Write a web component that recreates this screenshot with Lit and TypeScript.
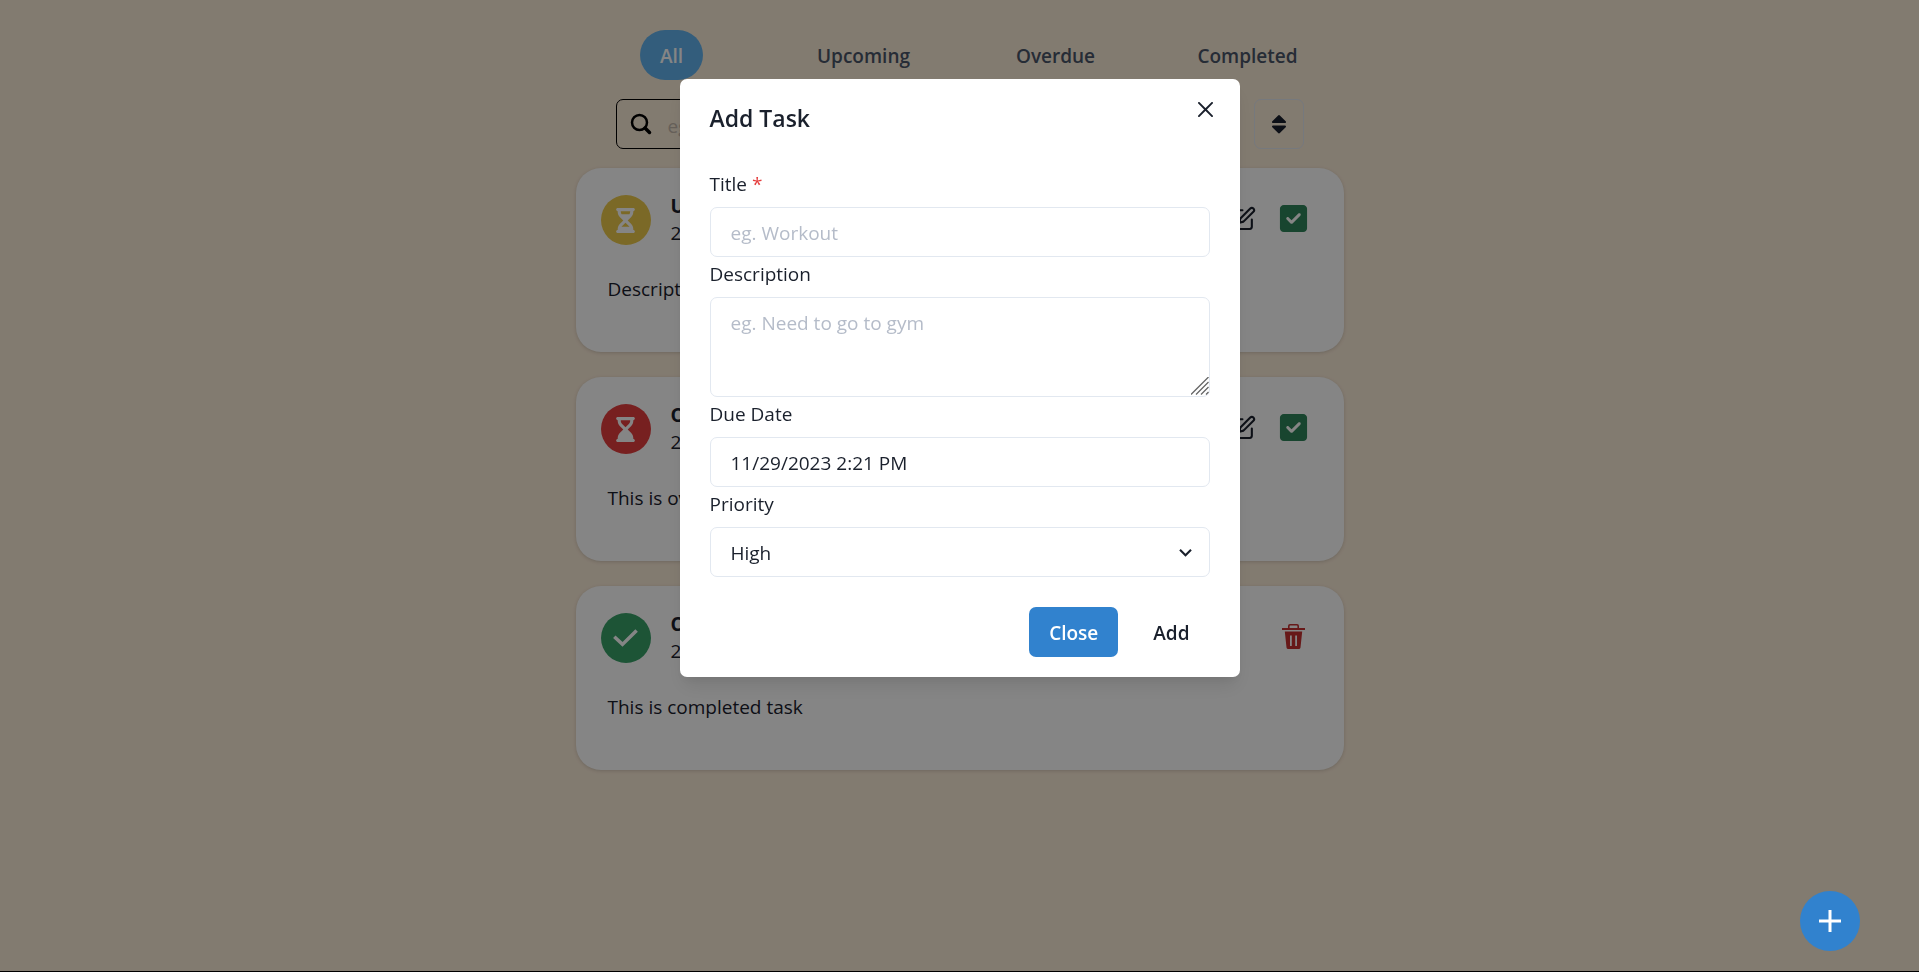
import { LitElement, html, css, svg } from "lit";
import { customElement, state } from "lit/decorators.js";

type Status = "upcoming" | "overdue" | "completed";
interface Task { status: Status; title: string; due: string; description: string; }

const HOURGLASS_HALF = "M32 0C14.3 0 0 14.3 0 32S14.3 64 32 64V75c0 42.4 16.9 83.1 46.9 113.1L146.7 256 78.9 323.9C48.9 353.9 32 394.6 32 437v11c-17.7 0-32 14.3-32 32s14.3 32 32 32H352c17.7 0 32-14.3 32-32s-14.3-32-32-32V437c0-42.4-16.9-83.1-46.9-113.1L237.3 256l67.9-67.9c30-30 46.9-70.7 46.9-113.1V64c17.7 0 32-14.3 32-32s-14.3-32-32-32H32zM96 75V64H288V75c0 19-5.6 37.4-16 53H112c-10.3-15.6-16-34-16-53zm16 309c3.5-5.3 7.6-10.3 12.1-14.9L192 301.3l67.9 67.9c4.6 4.6 8.6 9.6 12.1 14.9H112z";
const HOURGLASS_END = "M32 0C14.3 0 0 14.3 0 32S14.3 64 32 64V75c0 42.4 16.9 83.1 46.9 113.1L146.7 256 78.9 323.9C48.9 353.9 32 394.6 32 437v11c-17.7 0-32 14.3-32 32s14.3 32 32 32H352c17.7 0 32-14.3 32-32s-14.3-32-32-32V437c0-42.4-16.9-83.1-46.9-113.1L237.3 256l67.9-67.9c30-30 46.9-70.7 46.9-113.1V64c17.7 0 32-14.3 32-32s-14.3-32-32-32H32zM96 75V64H288V75c0 25.5-10.1 49.9-28.1 67.9L192 210.7l-67.9-67.9C106.1 124.9 96 100.4 96 75z";
const SQUARE_CHECK = "M64 32C28.7 32 0 60.7 0 96V416c0 35.3 28.7 64 64 64H384c35.3 0 64-28.7 64-64V96c0-35.3-28.7-64-64-64H64zM337 209L209 337c-9.4 9.4-24.6 9.4-33.9 0l-64-64c-9.4-9.4-9.4-24.6 0-33.9s24.6-9.4 33.9 0l47 47L303 175c9.4-9.4 24.6-9.4 33.9 0s9.4 24.6 0 33.9z";

const icons = {
  upcoming: svg`<svg width="25" height="25" viewBox="0 0 384 512" fill="currentColor"><path d=${HOURGLASS_HALF}></path></svg>`,
  overdue: svg`<svg width="25" height="25" viewBox="0 0 384 512" fill="currentColor"><path d=${HOURGLASS_END}></path></svg>`,
  completed: svg`<svg width="25" height="18" viewBox="0 0 25 18" fill="none" stroke="currentColor" stroke-width="3.500"><path d="M1.300 7.700 9.500 15.400 23.600 1.500"></path></svg>`,
  done: svg`<svg width="31" height="31" viewBox="0 0 448 512" fill="currentColor"><path d=${SQUARE_CHECK}></path></svg>`,
  edit: svg`<svg width="25" height="25" viewBox="0 0 24 24" fill="none" stroke="currentColor" stroke-width="2" stroke-linecap="round" stroke-linejoin="round"><path d="M11 4H4a2 2 0 0 0-2 2v14a2 2 0 0 0 2 2h14a2 2 0 0 0 2-2v-7"></path><path d="M18.5 2.5a2.121 2.121 0 0 1 3 3L12 15l-4 1 1-4 9.500-9.500z"></path></svg>`,
  trash: svg`<svg width="23" height="25" viewBox="0 0 23 25" fill="none" stroke="currentColor"><path d="M6.800 4.500V2a1.200 1.200 0 0 1 1.200-1.200h7A1.200 1.200 0 0 1 16.200 2v2.500" stroke-width="1.600"></path><path d="M0 5H23" stroke-width="2"></path><path fill="currentColor" stroke="none" fill-rule="evenodd" d="M2.800 7.500h17.400L18.500 23.400A1.800 1.800 0 0 1 16.700 25H6.300a1.800 1.800 0 0 1-1.800-1.600zM8 11.500v10.500h1.800V11.500zm5.200 0v10.500H15V11.500z"></path></svg>`,
  search: svg`<svg width="22" height="22" viewBox="0 0 22 22" fill="none" stroke="currentColor" stroke-linecap="round"><circle cx="9.500" cy="9.500" r="7.500" stroke-width="2.500"></circle><path d="M15 15l4.500 4.500" stroke-width="3.500"></path></svg>`,
  sort: svg`<svg width="14" height="20" viewBox="0 0 14 20" fill="currentColor"><path d="M1 9a1 1 0 0 1-.7-1.700L5.900 1.700a1.500 1.500 0 0 1 2.200 0l5.600 5.600A1 1 0 0 1 13 9zM1 11.500a1 1 0 0 0-.7 1.700L5.900 18.800a1.500 1.500 0 0 0 2.200 0l5.600-5.600a1 1 0 0 0-.7-1.700z"></path></svg>`,
  close: svg`<svg width="15" height="15" viewBox="0 0 24 24" fill="currentColor"><path d="M.439 21.440a1.500 1.500 0 0 0 2.122 2.121l9.262-9.261a.25.25 0 0 1 .354 0l9.262 9.263a1.500 1.500 0 1 0 2.122-2.121L14.300 12.177a.25.25 0 0 1 0-.354l9.263-9.262A1.500 1.500 0 0 0 21.439.44L12.177 9.700a.25.25 0 0 1-.354 0L2.561.44A1.500 1.500 0 0 0 .439 2.561L9.700 11.823a.25.25 0 0 1 0 .354z"></path></svg>`,
  chevron: svg`<svg width="25" height="25" viewBox="0 0 24 24" fill="currentColor"><path d="M16.590 8.590 12 13.170 7.410 8.590 6 10l6 6 6-6z"></path></svg>`,
  plus: svg`<svg width="30" height="30" viewBox="0 0 30 30" fill="none" stroke="currentColor" stroke-width="3"><path d="M15 4v22M4 15h22"></path></svg>`,
  grip: svg`<svg class="grip" width="18" height="18" viewBox="0 0 18 18" fill="none" stroke="#666" stroke-width="1.300"><path d="M0 17.500 17.500 0M5 17.500 17.500 5M10 17.500 17.500 10M15 17.500 17.500 15"></path></svg>`,
};

@customElement("app-root")
export class AppRoot extends LitElement {
  @state() private filter = "All";
  @state() private dialogOpen = true;

  private filters = ["All", "Upcoming", "Overdue", "Completed"];
  private tasks: Task[] = [
    { status: "upcoming", title: "Upcoming Task", due: "29-11-2023", description: "Description of upcoming task" },
    { status: "overdue", title: "Overdue Task", due: "28-11-2023", description: "This is overdue task" },
    { status: "completed", title: "Completed Task", due: "27-11-2023", description: "This is completed task" },
  ];

  static styles = css`
    :host {
      display: block;
      min-height: 100vh;
      box-sizing: border-box;
      background: #faebd7;
      border-bottom: 1px solid #000;
      color: #1a202c;
      font-family: "Segoe UI", "Open Sans", "Noto Sans", sans-serif;
      font-size: 19px;
      line-height: 30px;
    }
    *, *::before, *::after { box-sizing: border-box; }
    button, input, textarea, select { font: inherit; color: inherit; margin: 0; }
    button { border: 0; background: none; padding: 0; cursor: pointer; }
    svg { display: block; }
    .page { max-width: 768px; margin: 0 auto; padding: 30px 0 50px; display: flex; flex-direction: column; gap: 19px; }
    .tabs { display: grid; grid-template-columns: repeat(4, 1fr); justify-items: center; }
    .tab { height: 50px; padding: 2px 20px 0; border-radius: 25px; font-weight: 600; color: #4a5568; }
    .tab.active { background: #63b3ed; color: #fff; }
    .tools { display: flex; gap: 20px; padding: 0 40px; }
    .search { flex: 1; display: flex; align-items: center; height: 50px; border: 1px solid #000; border-radius: 7px; padding-left: 13px; gap: 16px; color: #000; }
    .search input { flex: 1; min-width: 0; height: 48px; border: 0; background: none; padding: 4px 0 0; outline: 0; }
    ::placeholder { color: #b5bcc9; opacity: 1; }
    .search ::placeholder { color: #c4b8ab; }
    .sort { width: 50px; height: 50px; border: 1px solid #e2e8f0; border-radius: 7px; display: grid; place-items: center; }
    .list { display: flex; flex-direction: column; gap: 25px; list-style: none; margin: 0; padding: 0; }
    .card { background: #fff; border-radius: 25px; padding: 25px 25px 48px; box-shadow: 0 1px 4px rgba(0,0,0,.1), 0 1px 3px rgba(0,0,0,.06); }
    .head { display: flex; gap: 20px; align-items: center; }
    .avatar { width: 50px; height: 50px; border-radius: 50%; display: grid; place-items: center; color: #fff; }
    .avatar.upcoming { background: #ecc94b; }
    .avatar.overdue { background: #e53e3e; }
    .avatar.completed { background: #38a169; }
    .names { flex: 1; }
    .names h2 { margin: 0; font-size: 19px; line-height: 26px; font-weight: 700; }
    .names p { margin: 0; line-height: 28px; }
    .actions { display: flex; align-self: flex-start; }
    .action { width: 50px; height: 50px; display: grid; place-items: center; }
    .action.done { color: #2f855a; }
    .action.trash { color: #c53030; }
    .desc { margin: 27px 0 0; padding-left: 7px; }
    .overlay { position: fixed; inset: 0 0 1px; background: rgba(0,0,0,.48); display: flex; justify-content: center; align-items: flex-start; padding-top: 79px; }
    .dialog { position: relative; width: 560px; background: #fff; border-radius: 7px; box-shadow: 0 12px 19px -4px rgba(0,0,0,.1), 0 5px 8px -2px rgba(0,0,0,.05); }
    .dialog header { padding: 20px 30px; }
    .dialog h1 { margin: 0; font-size: 23px; line-height: 38px; font-weight: 600; }
    .x { position: absolute; top: 10px; right: 14px; width: 40px; height: 40px; display: grid; place-items: center; }
    .fields { padding: 10px 30px; display: flex; flex-direction: column; }
    .fields label { padding-top: 2px; margin-bottom: 8px; }
    .req { color: #e53e3e; }
    .control { width: 100%; height: 50px; border: 1px solid #e2e8f0; border-radius: 7px; padding: 2px 20px 0; background: #fff; outline: 0; }
    textarea.control { height: 100px; padding: 10px 20px; display: block; resize: vertical; }
    textarea::-webkit-resizer { display: none; }
    .area { position: relative; }
    .grip { position: absolute; right: 1px; bottom: 2px; pointer-events: none; }
    .select { display: grid; align-items: center; }
    .select > * { grid-area: 1 / 1; }
    .select select { appearance: none; }
    .select svg { justify-self: end; margin-right: 12px; pointer-events: none; }
    .dialog footer { display: flex; justify-content: flex-end; gap: 15px; padding: 20px 30px; }
    .btn { height: 50px; padding: 2px 20px 0; border-radius: 7px; font-weight: 600; }
    .btn.primary { background: #3182ce; color: #fff; }
    .fab { position: fixed; right: 59px; bottom: 21px; width: 60px; height: 60px; border-radius: 50%; background: #3182ce; color: #fff; display: grid; place-items: center; }
  `;

  private close = () => { this.dialogOpen = false; };
  private open = () => { this.dialogOpen = true; };

  private card(t: Task) {
    return html`<li class="card">
      <div class="head">
        <span class="avatar ${t.status}">${icons[t.status]}</span>
        <div class="names"><h2>${t.title}</h2><p>${t.due}</p></div>
        <div class="actions">
          ${t.status === "completed"
            ? html`<button class="action trash" aria-label="Delete task">${icons.trash}</button>`
            : html`<button class="action" aria-label="Edit task">${icons.edit}</button>
                <button class="action done" aria-label="Mark as completed">${icons.done}</button>`}
        </div>
      </div>
      <p class="desc">${t.description}</p>
    </li>`;
  }

  private dialog() {
    return html`<div class="overlay">
      <section class="dialog" role="dialog" aria-modal="true" aria-labelledby="dialog-title">
        <header><h1 id="dialog-title">Add Task</h1></header>
        <button class="x" aria-label="Close dialog" @click=${this.close}>${icons.close}</button>
        <div class="fields">
          <label for="title">Title <span class="req">*</span></label>
          <input class="control" id="title" placeholder="eg. Workout" />
          <label for="description">Description</label>
          <div class="area">
            <textarea class="control" id="description" placeholder="eg. Need to go to gym"></textarea>
            ${icons.grip}
          </div>
          <label for="due">Due Date</label>
          <input class="control" id="due" .value=${"11/29/2023 2:21 PM"} />
          <label for="priority">Priority</label>
          <div class="select">
            <select class="control" id="priority"><option>High</option><option>Medium</option><option>Low</option></select>
            ${icons.chevron}
          </div>
        </div>
        <footer>
          <button class="btn primary" @click=${this.close}>Close</button>
          <button class="btn">Add</button>
        </footer>
      </section>
    </div>`;
  }

  render() {
    const shown = this.tasks.filter((t) => this.filter === "All" || t.status === this.filter.toLowerCase());
    return html`
      <main class="page">
        <nav class="tabs">
          ${this.filters.map((f) => html`<button class="tab ${f === this.filter ? "active" : ""}" @click=${() => { this.filter = f; }}>${f}</button>`)}
        </nav>
        <div class="tools">
          <label class="search">${icons.search}<input type="text" aria-label="Search tasks" placeholder="eg. Workout" /></label>
          <button class="sort" aria-label="Sort tasks">${icons.sort}</button>
        </div>
        <ul class="list">${shown.map((t) => this.card(t))}</ul>
      </main>
      ${this.dialogOpen ? this.dialog() : ""}
      <button class="fab" aria-label="Add a task" @click=${this.open}>${icons.plus}</button>
    `;
  }
}
